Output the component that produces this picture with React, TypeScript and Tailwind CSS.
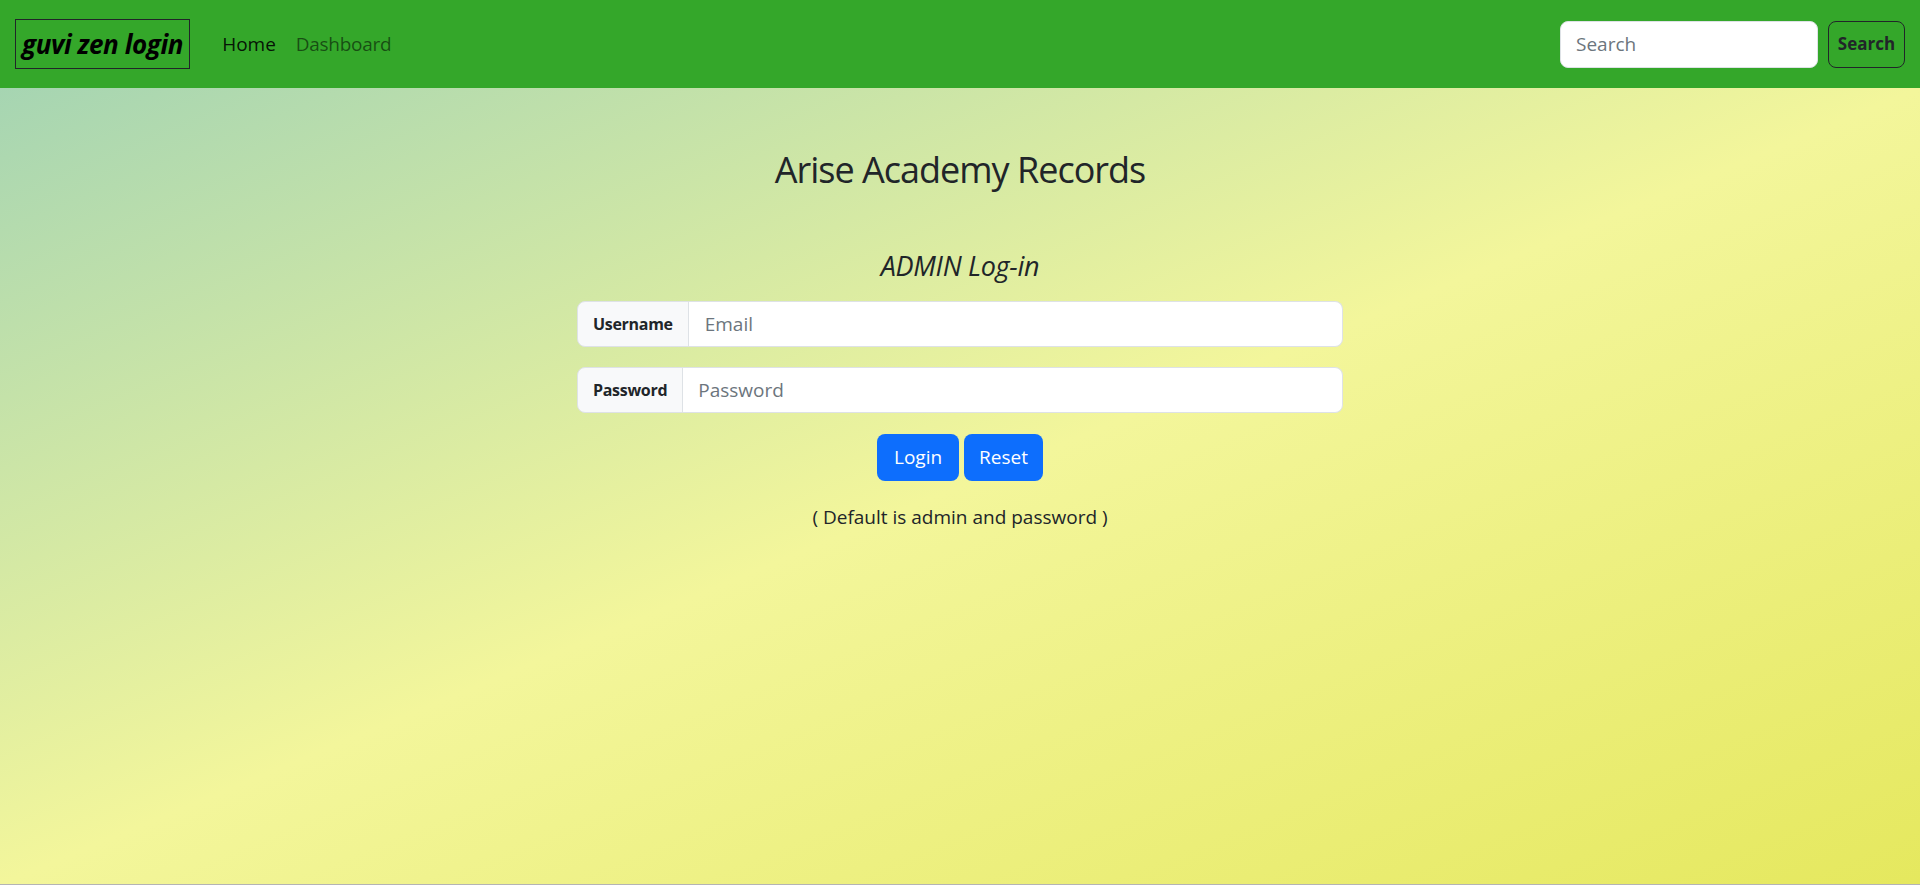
import React from "react";

export default function App() {
  return (
    <div
      className="h-[885px] w-full flex flex-col overflow-hidden"
      style={{ fontFamily: '"Open Sans", "Noto Sans", sans-serif' }}
    >
      <nav className="h-[88px] shrink-0 bg-[#34a72a] flex items-center justify-between px-[15px]">
        <div className="flex items-center">
          <a className="h-[50px] border border-[#212529] flex items-center px-[6px] mr-[22px] text-[26px] leading-none font-bold italic text-black tracking-[-0.4px]">
            guvi zen login
          </a>
          <a className="px-[10px] text-[19px] text-black/90">Home</a>
          <a className="px-[10px] text-[19px] text-black/55 tracking-[-0.3px]">Dashboard</a>
        </div>
        <form className="flex items-center gap-[10px]">
          <input
            type="text"
            placeholder="Search"
            className="w-[258px] h-[47px] rounded-[8px] bg-white border border-[#dee2e6] px-[15px] text-[19px] text-[#212529] placeholder:text-[#6c757d] outline-none"
          />
          <button
            type="button"
            className="w-[77px] h-[47px] rounded-[8px] border border-[#212529] text-[17px] font-bold text-[#212529]"
          >
            Search
          </button>
        </form>
      </nav>
      <main className="flex-1 bg-linear-to-br/srgb from-[#a6d5b2] via-[#f3f69b] to-[#e5e85e] border-b border-[#b4b4b4] flex flex-col items-center">
        <h2 className="mt-[58px] h-[48px] leading-[48px] text-[36px] font-medium text-[#212529] tracking-[-1px]">
          Arise Academy Records
        </h2>
        <h5 className="mt-[57px] h-[30px] leading-[30px] text-[27px] font-medium italic text-[#212529] tracking-[-0.3px]">
          ADMIN Log-in
        </h5>
        <div className="mt-[20px] w-[766px] flex flex-col gap-[20px]">
          <div className="flex h-[46px]">
            <span className="flex items-center px-[15px] bg-[#f8f9fa] border border-[#dee2e6] rounded-l-[8px] text-[16px] font-bold text-[#212529] tracking-[-0.3px]">
              Username
            </span>
            <input
              type="text"
              placeholder="Email"
              className="flex-1 min-w-0 bg-white border border-l-0 border-[#dee2e6] rounded-r-[8px] px-[16px] text-[19px] text-[#212529] placeholder:text-[#6c757d] outline-none"
            />
          </div>
          <div className="flex h-[46px]">
            <span className="flex items-center px-[15px] bg-[#f8f9fa] border border-[#dee2e6] rounded-l-[8px] text-[16px] font-bold text-[#212529] tracking-[-0.3px]">
              Password
            </span>
            <input
              type="password"
              placeholder="Password"
              className="flex-1 min-w-0 bg-white border border-l-0 border-[#dee2e6] rounded-r-[8px] px-[15px] text-[19px] text-[#212529] placeholder:text-[#6c757d] outline-none"
            />
          </div>
        </div>
        <div className="mt-[21px] flex gap-[5px]">
          <button
            type="button"
            className="h-[47px] px-[17px] rounded-[8px] bg-[#0d6efd] text-white text-[19px]"
          >
            Login
          </button>
          <button
            type="button"
            className="h-[47px] px-[15px] rounded-[8px] bg-[#0d6efd] text-white text-[19px]"
          >
            Reset
          </button>
        </div>
        <p className="mt-[21px] h-[30px] leading-[30px] text-[19px] text-[#212529]">
          ( Default is admin and password )
        </p>
      </main>
    </div>
  );
}
